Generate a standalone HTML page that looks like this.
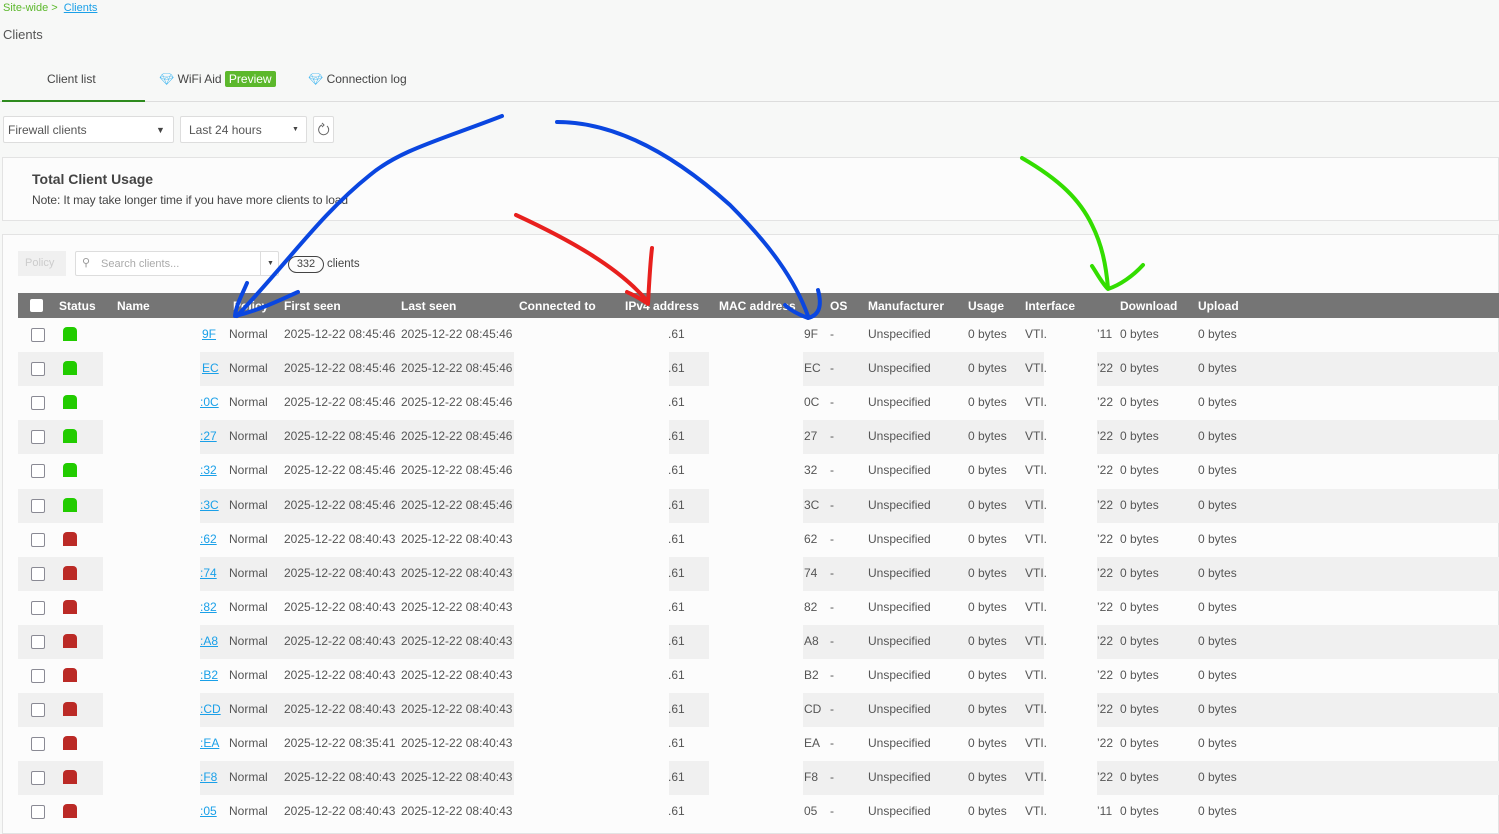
<!DOCTYPE html>
<html><head><meta charset="utf-8"><style>
*{margin:0;padding:0;box-sizing:border-box}
body{width:1499px;height:819px;overflow:hidden;background:#f7f8f7;font-family:"Liberation Sans",sans-serif;color:#444;position:relative;font-size:12px}
.a{position:absolute;white-space:nowrap}
.row{position:absolute;left:18px;width:1481px;height:34px}
.g{position:absolute;top:0;height:34px;background:#f0f0f0}
.cb{position:absolute;left:13px;top:10px;width:14px;height:14px;border:1.5px solid #8a8a94;border-radius:2px;background:#fff}
.st{position:absolute;left:45px;top:9px;width:14px;height:14px;border-radius:4px 4px 0 0}
.t{position:absolute;top:9px;font-size:12px;color:#555;white-space:nowrap}
.lk{color:#1aa0e8;text-decoration:underline}
.h{position:absolute;top:6px;color:#fff;font-size:12px;font-weight:bold;white-space:nowrap}
</style></head><body>
<div class="a" style="left:3px;top:2px;font-size:11px;color:#5cb82c">Site-wide &gt; <span style="color:#1aa0e8;text-decoration:underline;margin-left:3px">Clients</span></div>
<div class="a" style="left:3px;top:27px;font-size:13px;color:#555">Clients</div>
<div class="a" style="left:47px;top:72px;font-size:12px;color:#444">Client list</div>
<div class="a" style="left:159px;top:72px;font-size:12px;color:#444"><span style="color:#3ab4f0">&#x1F48E;&#xFE0E;</span> WiFi Aid <span style="background:#5cb82c;color:#fff;padding:1px 4px;border-radius:2px">Preview</span></div>
<div class="a" style="left:308px;top:72px;font-size:12px;color:#444"><span style="color:#3ab4f0">&#x1F48E;&#xFE0E;</span> Connection log</div>
<div class="a" style="left:0;top:101px;width:1499px;height:1px;background:#ddd"></div>
<div class="a" style="left:2px;top:100px;width:143px;height:2px;background:#2e8b1e"></div>
<div class="a" style="left:3px;top:116px;width:171px;height:27px;border:1px solid #ddd;border-radius:2px;background:#fff"><span class="a" style="left:4px;top:6px;font-size:12px;color:#555">Firewall clients</span><span class="a" style="left:152px;top:8px;font-size:9px">▼</span></div>
<div class="a" style="left:180px;top:116px;width:127px;height:27px;border:1px solid #ddd;border-radius:2px;background:#fff"><span class="a" style="left:8px;top:6px;font-size:12px;color:#555">Last 24 hours</span><span class="a" style="left:111px;top:9px;font-size:7px">▼</span></div>
<div class="a" style="left:313px;top:116px;width:21px;height:27px;border:1px solid #ddd;border-radius:2px;background:#fff"><svg width="19" height="25"><path d="M13 9 A5 5 0 1 1 8 8" fill="none" stroke="#666" stroke-width="1"/><path d="M8 6 L10 8 L8 10" fill="none" stroke="#666" stroke-width="1"/></svg></div>
<div class="a" style="left:2px;top:157px;width:1497px;height:64px;border:1px solid #e3e3e3;background:#fcfcfc"></div>
<div class="a" style="left:32px;top:171px;font-size:14px;font-weight:bold;color:#444">Total Client Usage</div>
<div class="a" style="left:32px;top:193px;font-size:12px;color:#444;letter-spacing:-0.1px">Note: It may take longer time if you have more clients to load</div>
<div class="a" style="left:2px;top:234px;width:1497px;height:600px;border:1px solid #e3e3e3;background:#fcfcfc"></div>
<div class="a" style="left:18px;top:251px;width:48px;height:25px;background:#f0f0f0;color:#ccc;font-size:11px;padding:6px 0 0 7px">Policy</div>
<div class="a" style="left:75px;top:251px;width:204px;height:25px;border:1px solid #ddd;border-radius:2px;background:#fff"><span class="a" style="left:6px;top:4px;color:#999;font-size:11px">⚲</span><span class="a" style="left:25px;top:6px;color:#aaa;font-size:11px">Search clients...</span><span class="a" style="left:184px;top:-1px;width:1px;height:25px;background:#ddd"></span><span class="a" style="left:191px;top:8px;font-size:7px">▼</span></div>
<div class="a" style="left:288px;top:256px;width:36px;height:17px;border:1px solid #444;border-radius:9px;font-size:11px;text-align:center;line-height:15px">332</div>
<div class="a" style="left:327px;top:258px;font-size:11.5px">clients</div>
<div class="a" style="left:18px;top:293px;width:1481px;height:25px;background:#757575">
<div class="a" style="left:12px;top:6px;width:13px;height:13px;background:#fff;border-radius:2px"></div>
<span class="h" style="left:41px">Status</span><span class="h" style="left:99px">Name</span><span class="h" style="left:215px">Policy</span><span class="h" style="left:266px">First seen</span><span class="h" style="left:383px">Last seen</span><span class="h" style="left:501px">Connected to</span><span class="h" style="left:607px">IPv4 address</span><span class="h" style="left:701px">MAC address</span><span class="h" style="left:812px">OS</span><span class="h" style="left:850px">Manufacturer</span><span class="h" style="left:950px">Usage</span><span class="h" style="left:1007px">Interface</span><span class="h" style="left:1102px">Download</span><span class="h" style="left:1180px">Upload</span>
</div>
<div id="rows"></div>
<script>
var d=[["9F","08:45:46","08:45:46",1,"11"],["EC","08:45:46","08:45:46",1,"22"],[":0C","08:45:46","08:45:46",1,"22"],[":27","08:45:46","08:45:46",1,"22"],[":32","08:45:46","08:45:46",1,"22"],[":3C","08:45:46","08:45:46",1,"22"],[":62","08:40:43","08:40:43",0,"22"],[":74","08:40:43","08:40:43",0,"22"],[":82","08:40:43","08:40:43",0,"22"],[":A8","08:40:43","08:40:43",0,"22"],[":B2","08:40:43","08:40:43",0,"22"],[":CD","08:40:43","08:40:43",0,"22"],[":EA","08:35:41","08:40:43",0,"22"],[":F8","08:40:43","08:40:43",0,"22"],[":05","08:40:43","08:40:43",0,"11"]];
var h="";
d.forEach(function(r,i){
var top=318+i*34.1;var m=r[0].replace(":","");
h+='<div class="row" style="top:'+top+'px">';
if(i%2){h+='<div class="g" style="left:0;width:85px"></div><div class="g" style="left:182px;width:314px"></div><div class="g" style="left:651px;width:40px"></div><div class="g" style="left:785px;width:241px"></div><div class="g" style="left:1079px;width:402px"></div>';}
h+='<div class="cb"></div><div class="st" style="background:'+(r[3]?'#22cc00':'#bb2a26')+'"></div>';
h+='<span class="t lk" style="left:'+(r[0].length>2?182:184)+'px">'+r[0]+'</span><span class="t" style="left:211px">Normal</span><span class="t" style="left:266px">2025-12-22 '+r[1]+'</span><span class="t" style="left:383px">2025-12-22 '+r[2]+'</span><span class="t" style="left:650px">.61</span><span class="t" style="left:786px">'+m+'</span><span class="t" style="left:812px">-</span><span class="t" style="left:850px">Unspecified</span><span class="t" style="left:950px">0 bytes</span><span class="t" style="left:1007px">VTI.</span><span class="t" style="left:1079px">&#8217;'+r[4]+'</span><span class="t" style="left:1102px">0 bytes</span><span class="t" style="left:1180px">0 bytes</span></div>';});
document.getElementById("rows").innerHTML=h;
</script>
<svg class="a" style="left:0;top:0" width="1499" height="819" fill="none" stroke-linecap="round" stroke-linejoin="round" stroke-width="4">
<path d="M502 116 C440 140 400 150 370 175 C320 215 290 260 237 316" stroke="#0a46e0"/>
<path d="M247 283 C242 295 236 305 235 316 C260 310 280 300 298 292" stroke="#0a46e0"/>
<path d="M557 122 C620 122 680 160 730 205 C770 245 795 280 808 316" stroke="#0a46e0"/>
<path d="M818 290 C822 305 820 315 808 318 C800 315 790 310 785 305" stroke="#0a46e0"/>
<path d="M516 215 C570 240 620 268 648 302" stroke="#e8201e"/>
<path d="M652 248 C650 265 649 285 648 304 C640 298 633 295 627 292" stroke="#e8201e"/>
<path d="M1022 158 C1060 180 1080 200 1092 225 C1102 245 1106 265 1108 288" stroke="#33dd00"/>
<path d="M1092 266 C1098 275 1102 283 1108 289 C1120 285 1133 276 1143 265" stroke="#33dd00"/>
</svg>
</body></html>
